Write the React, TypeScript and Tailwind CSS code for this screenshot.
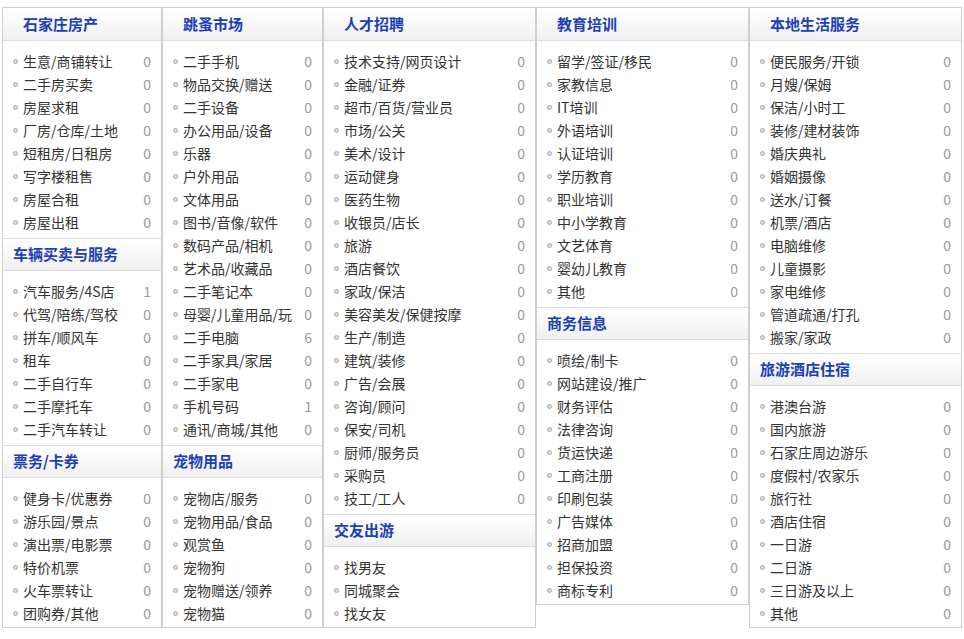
type Sec = { title: string; items: [string, number | null][] };
const z = (a: string[], c?: (number | null)[]): [string, number | null][] => a.map((s, i) => [s, c ? c[i] : 0]);
const cols: { w: string; secs: Sec[] }[] = [
  { w: "w-[160px]", secs: [
    { title: "石家庄房产", items: z(["生意/商铺转让","二手房买卖","房屋求租","厂房/仓库/土地","短租房/日租房","写字楼租售","房屋合租","房屋出租"]) },
    { title: "车辆买卖与服务", items: z(["汽车服务/4S店","代驾/陪练/驾校","拼车/顺风车","租车","二手自行车","二手摩托车","二手汽车转让"],[1,0,0,0,0,0,0]) },
    { title: "票务/卡券", items: z(["健身卡/优惠券","游乐园/景点","演出票/电影票","特价机票","火车票转让","团购券/其他"]) },
  ]},
  { w: "w-[161px]", secs: [
    { title: "跳蚤市场", items: z(["二手手机","物品交换/赠送","二手设备","办公用品/设备","乐器","户外用品","文体用品","图书/音像/软件","数码产品/相机","艺术品/收藏品","二手笔记本","母婴/儿童用品/玩","二手电脑","二手家具/家居","二手家电","手机号码","通讯/商城/其他"],[0,0,0,0,0,0,0,0,0,0,0,0,6,0,0,1,0]) },
    { title: "宠物用品", items: z(["宠物店/服务","宠物用品/食品","观赏鱼","宠物狗","宠物赠送/领养","宠物猫"]) },
  ]},
  { w: "w-[213px]", secs: [
    { title: "人才招聘", items: z(["技术支持/网页设计","金融/证券","超市/百货/营业员","市场/公关","美术/设计","运动健身","医药生物","收银员/店长","旅游","酒店餐饮","家政/保洁","美容美发/保健按摩","生产/制造","建筑/装修","广告/会展","咨询/顾问","保安/司机","厨师/服务员","采购员","技工/工人"]) },
    { title: "交友出游", items: z(["找男友","同城聚会","找女友"],[null,null,null]) },
  ]},
  { w: "w-[213px]", secs: [
    { title: "教育培训", items: z(["留学/签证/移民","家教信息","IT培训","外语培训","认证培训","学历教育","职业培训","中小学教育","文艺体育","婴幼儿教育","其他"]) },
    { title: "商务信息", items: z(["喷绘/制卡","网站建设/推广","财务评估","法律咨询","货运快递","工商注册","印刷包装","广告媒体","招商加盟","担保投资","商标专利"]) },
  ]},
  { w: "w-[213px]", secs: [
    { title: "本地生活服务", items: z(["便民服务/开锁","月嫂/保姆","保洁/小时工","装修/建材装饰","婚庆典礼","婚姻摄像","送水/订餐","机票/酒店","电脑维修","儿童摄影","家电维修","管道疏通/打孔","搬家/家政"]) },
    { title: "旅游酒店住宿", items: z(["港澳台游","国内旅游","石家庄周边游乐","度假村/农家乐","旅行社","酒店住宿","一日游","二日游","三日游及以上","其他"]) },
  ]},
];

export default function App() {
  return (
    <div className="w-[964px] h-[639px] bg-white pt-[7px] pl-[2px] flex items-start" style={{ fontFamily: '"Noto Sans CJK SC", "Noto Sans", sans-serif' }}>
      {cols.map((c, ci) => (
        <div key={ci} className={`${c.w} border border-[#cfcfcf] bg-white`}>
          {c.secs.map((s, si) => (
            <div key={si}>
              <div className={`h-[33px] flex items-center border-b border-[#dcdcdc] bg-gradient-to-b from-white to-[#f0f0f0] text-[15px] font-bold text-[#1c3fb5] ${si === 0 ? "pl-[20px]" : "pl-[10px] mt-[2px] border-t border-t-[#dcdcdc]"}`}>
                {s.title}
              </div>
              <div className="pt-[9px] pb-[2px]">
                {s.items.map(([t, n], ii) => (
                  <div key={ii} className="h-[23px] flex items-center pl-[10px] pr-[10px] text-[14px] text-[#333]">
                    <span className="w-[5px] h-[5px] rounded-full border border-[#aaa] bg-[#ddd] mr-[5px] shrink-0" />
                    <span className="flex-1 whitespace-nowrap overflow-hidden">{t}</span>
                    {n !== null && <span className="text-[#999] ml-1">{n}</span>}
                  </div>
                ))}
              </div>
            </div>
          ))}
        </div>
      ))}
    </div>
  );
}
